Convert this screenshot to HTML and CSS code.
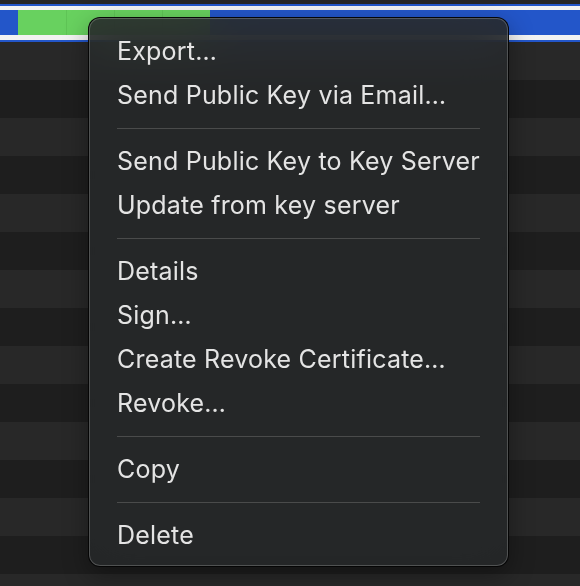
FILE: index.html
```html
<!DOCTYPE html>
<html lang="en">
<head>
<meta charset="utf-8">
<title>Key context menu</title>
<link rel="stylesheet" href="styles.css">
</head>
<body>
<div class="table">
  <div class="strip strip-dark"></div>
  <div class="strip strip-blue2"></div>
  <div class="strip strip-white4"></div>
  <div class="selected-row">
    <div class="cell-green">
      <span class="tick"></span><span class="tick"></span><span class="tick"></span>
    </div>
  </div>
  <div class="strip strip-white5"></div>
  <div class="strip strip-blue2"></div>
  <div class="row light"></div>
  <div class="row dark"></div>
  <div class="row light"></div>
  <div class="row dark"></div>
  <div class="row light"></div>
  <div class="row dark"></div>
  <div class="row light"></div>
  <div class="row dark"></div>
  <div class="row light"></div>
  <div class="row dark"></div>
  <div class="row light"></div>
  <div class="row dark"></div>
  <div class="row light"></div>
  <div class="row dark"></div>
  <div class="row light"></div>
</div>

<div class="menu">
  <div class="item">Export…</div>
  <div class="item">Send Public Key via Email…</div>
  <div class="sep"></div>
  <div class="item">Send Public Key to Key Server</div>
  <div class="item">Update from key server</div>
  <div class="sep"></div>
  <div class="item">Details</div>
  <div class="item">Sign…</div>
  <div class="item">Create Revoke Certificate…</div>
  <div class="item">Revoke…</div>
  <div class="sep"></div>
  <div class="item">Copy</div>
  <div class="sep"></div>
  <div class="item">Delete</div>
</div>
</body>
</html>
```

FILE: styles.css
```css
html, body {
  margin: 0;
  padding: 0;
  width: 580px;
  height: 586px;
  overflow: hidden;
  background: #282828;
}

.table {
  display: flex;
  flex-direction: column;
  width: 580px;
}

.strip { width: 100%; }
.strip-dark { height: 4px; background: #262626; }
.strip-blue2 { height: 2px; background: #2356c9; }
.strip-white4 { height: 4px; background: #f2f2f2; }
.strip-white5 { height: 5px; background: #f2f2f2; }

.selected-row {
  height: 25px;
  background: #2356c9;
  display: flex;
  padding-left: 18px;
}

.cell-green {
  width: 192px;
  height: 100%;
  background: #68d15f;
  display: flex;
  gap: 47px;
  padding-left: 48px;
  box-sizing: border-box;
}

.tick {
  width: 1px;
  height: 100%;
  background: #5fc456;
}

.row { height: 38px; }
.row.light { background: #282828; }
.row.dark { background: #1e1e1e; }

.menu {
  position: absolute;
  left: 88px;
  top: 17px;
  width: 421px;
  box-sizing: border-box;
  padding: 11px 0 9px;
  border: 1px solid rgba(0, 0, 0, 0.85);
  border-radius: 12px;
  background: rgba(38, 40, 41, 0.88);
  backdrop-filter: blur(24px);
  box-shadow: inset 0 0 0 1px rgba(255, 255, 255, 0.2), 0 8px 24px rgba(0, 0, 0, 0.35);
  display: flex;
  flex-direction: column;
  font-family: Inter, "Noto Sans", sans-serif;
  font-size: 25px;
  letter-spacing: 0.2px;
  color: #e4e4e4;
}

.item {
  height: 44px;
  line-height: 44px;
  padding-left: 28px;
  white-space: nowrap;
}

.sep {
  height: 22px;
  display: flex;
  align-items: center;
  padding: 0 28px;
}

.sep::before {
  content: "";
  flex: 1;
  height: 1px;
  background: #4a4b4b;
}
```
